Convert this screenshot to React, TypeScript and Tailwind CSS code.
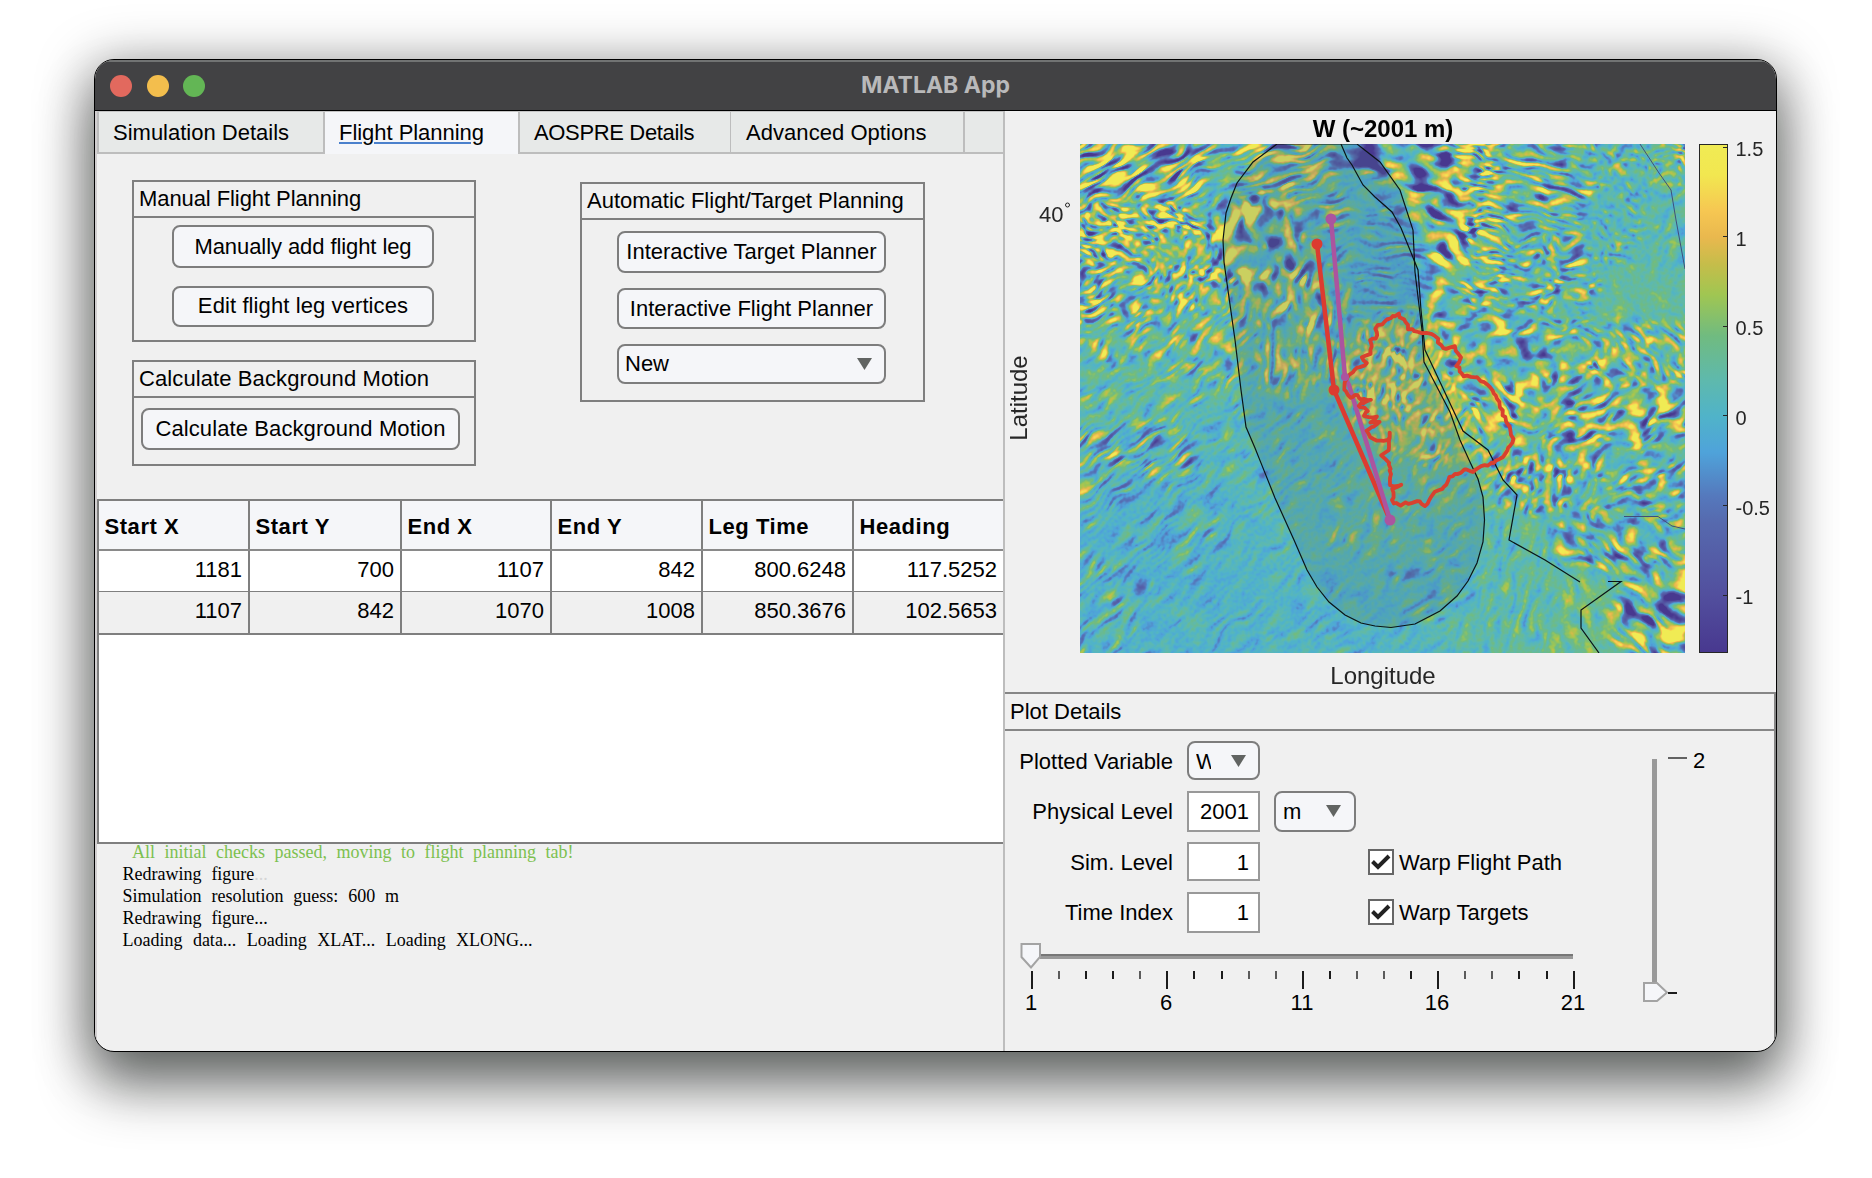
import { useEffect, useRef, type ReactNode } from "react";

const PLOT_W = 605;
const PLOT_H = 509;
const LEVEL_MAX = 1.52;
const LEVEL_MIN = -1.32;

// Colour stops of the vertical-velocity scale, from lowest to highest level.
const STOPS: [number, number, number, number][] = [
  [-1.32, 72, 56, 143],
  [-1.0, 82, 79, 158],
  [-0.6, 86, 105, 174],
  [-0.45, 85, 120, 188],
  [-0.2, 79, 163, 218],
  [0.0, 80, 179, 201],
  [0.2, 94, 185, 173],
  [0.45, 112, 187, 128],
  [0.68, 160, 198, 82],
  [0.85, 197, 189, 74],
  [1.0, 233, 184, 78],
  [1.15, 246, 199, 82],
  [1.35, 242, 231, 80],
  [1.52, 240, 235, 84],
];

function colourOf(v: number): [number, number, number] {
  if (v <= STOPS[0][0]) return [72, 56, 143];
  for (let i = 1; i < STOPS.length; i++) {
    if (v <= STOPS[i][0]) {
      const a = STOPS[i - 1];
      const b = STOPS[i];
      const t = (v - a[0]) / (b[0] - a[0]);
      return [a[1] + (b[1] - a[1]) * t, a[2] + (b[2] - a[2]) * t, a[3] + (b[3] - a[3]) * t];
    }
  }
  return [240, 235, 84];
}

function hash(x: number, y: number, s: number) {
  let h = (x * 374761393 + y * 668265263 + s * 974634777) | 0;
  h = Math.imul(h ^ (h >>> 13), 1274126177);
  h ^= h >>> 16;
  return (h >>> 0) / 4294967296;
}

function corner(ix: number, iy: number, fx: number, fy: number, s: number) {
  const a = hash(ix, iy, s) * Math.PI * 2;
  return Math.cos(a) * fx + Math.sin(a) * fy;
}

function noise(x: number, y: number, s: number) {
  const ix = Math.floor(x);
  const iy = Math.floor(y);
  const fx = x - ix;
  const fy = y - iy;
  const u = fx * fx * (3 - 2 * fx);
  const v = fy * fy * (3 - 2 * fy);
  const a = corner(ix, iy, fx, fy, s);
  const b = corner(ix + 1, iy, fx - 1, fy, s);
  const c = corner(ix, iy + 1, fx, fy - 1, s);
  const d = corner(ix + 1, iy + 1, fx - 1, fy - 1, s);
  return (a + (b - a) * u) * (1 - v) + (c + (d - c) * u) * v;
}

// Wave regions: centre, radii, crest direction (degrees), crest length, spacing, amplitude, offset.
const REGIONS: number[][] = [
  [60, 20, 110, 45, -30, 36, 7.5, 4.4, 0.25],
  [190, 20, 90, 38, -16, 34, 7, 3.6, 0.35],
  [60, 92, 80, 40, 20, 12, 7, 3.6, 0.5],
  [20, 150, 70, 45, -25, 16, 7, 3.2, 0.25],
  [110, 130, 60, 50, -60, 12, 8, 3.0, 0.4],
  [90, 200, 110, 45, -48, 20, 8, 1.9, 0.3],
  [172, 90, 50, 60, -82, 26, 15, 5.2, 0.25],
  [215, 150, 50, 60, -80, 20, 11, 3.6, 0.25],
  [215, 215, 45, 40, -85, 20, 8, 2.2, 0.4],
  [265, 75, 40, 80, -8, 24, 8, 1.5, 0.1],
  [310, 110, 45, 60, 4, 30, 7, 1.4, -0.12],
  [290, 12, 45, 22, 12, 40, 15, 5.0, -0.7],
  [350, 30, 40, 34, 8, 34, 13, 5.0, 0.3],
  [375, 80, 38, 60, 30, 24, 14, 4.6, 0.4],
  [398, 60, 24, 90, 10, 15, 6, 4.2, 0.5],
  [410, 130, 30, 40, 12, 16, 6, 3.4, 0.3],
  [460, 50, 60, 40, 12, 24, 7, 2.6, 0.2],
  [470, 140, 60, 50, -6, 14, 8, 2.4, 0.2],
  [540, 60, 40, 80, 40, 10, 8, 1.2, 0.15],
  [585, 90, 30, 70, -60, 20, 10, 0.8, 0.2],
  [590, 20, 18, 20, 0, 10, 6, 2.4, 0.4],
  [560, 150, 45, 35, 50, 24, 12, 0.5, 0.3],
  [420, 200, 60, 40, -20, 20, 13, 2.8, 0.2],
  [430, 250, 40, 40, 40, 20, 10, 3.8, 0.5],
  [560, 210, 60, 40, 45, 16, 8, 2.2, 0.35],
  [520, 270, 90, 50, -25, 20, 10, 3.2, 0.3],
  [470, 330, 60, 40, -60, 14, 9, 2.8, 0.3],
  [570, 340, 60, 50, -20, 18, 10, 2.6, 0.15],
  [530, 400, 60, 40, 40, 20, 10, 2.6, 0.15],
  [575, 475, 60, 32, 42, 34, 12, 4.6, 0.2],
  [500, 470, 40, 50, 70, 24, 12, 1.0, 0.4],
  [430, 440, 60, 70, -75, 26, 8, 0.8, 0.22],
  [320, 240, 50, 60, -70, 13, 8, 2.5, 0.68],
  [355, 285, 40, 40, -60, 14, 8, 1.8, 0.6],
  [300, 370, 90, 60, -50, 20, 9, 1.1, 0.25],
  [350, 430, 70, 50, -35, 26, 9, 1.2, 0.1],
  [200, 330, 80, 90, -42, 26, 8, 0.85, 0.12],
  [240, 470, 100, 60, -38, 28, 9, 0.65, 0.05],
  [40, 250, 70, 40, -36, 30, 8, 1.3, 0.22],
  [50, 305, 75, 42, -38, 30, 6.5, 2.2, 0.1],
  [90, 390, 90, 60, -44, 44, 8, 1.25, 0],
  [30, 450, 60, 60, -48, 34, 8, 1.3, 0.05],
  [130, 470, 90, 60, -44, 40, 8, 0.75, 0],
];

const GRAIN = 0.74;

function paintField(canvas: HTMLCanvasElement) {
  const ctx = canvas.getContext("2d");
  if (!ctx) return;
  const img = ctx.createImageData(PLOT_W, PLOT_H);
  const dirs = REGIONS.map((r) => [Math.cos((r[4] * Math.PI) / 180), Math.sin((r[4] * Math.PI) / 180)]);
  for (let y = 0; y < PLOT_H; y++) {
    for (let x = 0; x < PLOT_W; x++) {
      const wx = x + 9 * noise(x / 26, y / 26, 91);
      const wy = y + 9 * noise(x / 26, y / 26, 92);
      const envelope = Math.max(0.45, 0.95 + 1.1 * noise(x / 24, y / 20, 41));
      let sum = 0;
      let total = 0;
      for (let i = 0; i < REGIONS.length; i++) {
        const r = REGIONS[i];
        const dx = (wx - r[0]) / r[2];
        const dy = (wy - r[1]) / r[3];
        const d2 = dx * dx + dy * dy;
        if (d2 > 4.5) continue;
        const w = Math.exp(-2.6 * d2);
        const along = (wx * dirs[i][0] + wy * dirs[i][1]) / (r[5] * GRAIN);
        const across = (wy * dirs[i][0] - wx * dirs[i][1]) / (r[6] * GRAIN);
        sum += w * (r[8] + r[7] * envelope * noise(along, across, i + 1));
        total += w;
      }
      const v = total > 0 ? sum / total : 0;
      const c = colourOf(v + 0.25 * noise(x / 3.5, y / 3.5, 77));
      const k = (y * PLOT_W + x) * 4;
      img.data[k] = c[0];
      img.data[k + 1] = c[1];
      img.data[k + 2] = c[2];
      img.data[k + 3] = 255;
    }
  }
  ctx.putImageData(img, 0, 0);
}

const SWATH =
  "M272 32 L248 50 L232 71 L226 86 L221 101 L218 128 L219 150 L230 228 L236 278 L241 315 L250 336 L270 386 L289 428 L302 458 L312 475 L324 490 L340 503 L356 511 L370 514 L386 515.5 L410 512 L435 499 L452 484 L463 469 L472 451 L478 430 L479.500 408 L478 385 L473 367 L465 350 L455 328 L445 300 L419 250 L417 218 L410 160 L408 118 L395 78 L375 50 L352 32 Z";

// Outline of the target area.
const TARGET: [number, number][] = [
  [393, 202], [388, 205], [379, 209], [371, 216], [371, 226], [366, 229], [367, 235], [365, 242], [357, 245], [362, 251],
  [352, 256], [345, 263], [339, 269], [339, 277], [345, 286], [353, 282], [356, 288], [365, 288], [353, 293], [362, 298],
  [358, 303], [365, 306], [372, 304], [366, 310], [374, 309], [367, 316], [362, 318], [368, 328], [383, 328], [384, 321],
  [386, 322], [383, 330], [383, 338], [376, 344], [383, 350], [386, 362], [386, 374], [395, 373], [388, 378], [388, 391],
  [396, 393], [400, 391], [415, 390], [420, 394], [429, 379], [437, 377], [445, 366], [459, 358], [469, 359], [475, 354],
  [489, 351], [500, 342], [508, 330], [506, 316], [500, 306], [495, 296], [493, 286], [485, 275], [473, 266], [466, 264],
  [459, 265], [452, 254], [455, 245], [450, 235], [438, 236], [432, 226], [425, 221], [417, 222], [403, 217], [401, 209],
];

function roughPath(points: [number, number][]) {
  const out: string[] = [];
  points.forEach((p, i) => {
    const q = points[(i + 1) % points.length];
    const n = Math.max(1, Math.round(Math.hypot(q[0] - p[0], q[1] - p[1]) / 3.5));
    for (let k = 0; k < n; k++) {
      const jx = (hash(i, k, 5) - 0.5) * 2.4;
      const jy = (hash(i, k, 9) - 0.5) * 2.4;
      const x = p[0] + ((q[0] - p[0]) * k) / n + jx;
      const y = p[1] + ((q[1] - p[1]) * k) / n + jy;
      out.push(`${x.toFixed(1)} ${y.toFixed(1)}`);
    }
  });
  return `M${out.join(" L")} Z`;
}

function Axes() {
  const ref = useRef<HTMLCanvasElement>(null);
  useEffect(() => {
    if (ref.current) paintField(ref.current);
  }, []);
  const levels = [1.5, 1, 0.5, 0, -0.5, -1];
  return (
    <div className="relative h-[580px] w-full shrink-0">
      <canvas ref={ref} width={PLOT_W} height={PLOT_H} className="absolute top-8 left-[75px]" />
      <svg width="771" height="580" viewBox="0 0 771 580" className="absolute inset-0" fontFamily="'Liberation Sans', Arial, sans-serif">
        <defs>
          <linearGradient id="scale" x1="0" y1="1" x2="0" y2="0">
            {STOPS.map((s) => (
              <stop key={s[0]} offset={(s[0] - LEVEL_MIN) / (LEVEL_MAX - LEVEL_MIN)} stopColor={`rgb(${s[1]},${s[2]},${s[3]})`} />
            ))}
          </linearGradient>
          <clipPath id="plot">
            <rect x="75" y="32" width="605" height="509" />
          </clipPath>
        </defs>
        <g clipPath="url(#plot)" fill="none">
          <path d={SWATH} fill="rgb(70,115,140)" fillOpacity="0.22" />
          <path d={SWATH} stroke="#0b1417" strokeWidth="1.2" />
          <path
            d="M336 32 L342 46 L347 53 L358 73 L370 85 L387 100 L396 116 L407 143 L413 158 L416 198 L420 238 L435 270 L458 319 L483 338 L498 368 L512 383 L504 428 L540 448 L575 470"
            stroke="#0b1417"
            strokeWidth="1.2"
          />
          <path d="M603 469.500 H616 L576 498 V516 L594 541" stroke="#0b1417" strokeWidth="1.200" />
          <path d="M635 32 L654 61 L666 78 L671 108 L680 157 M619 404.500 H653 L667 414 L680 417" stroke="#3f4f7c" strokeWidth="1" />
          <path d="M312 132 L329 278 L385 408" stroke="#dc3b30" strokeWidth="4.500" />
          <path d="M326 107 L340 265 L344 273 L385 408" stroke="#ab549f" strokeWidth="4.500" />
          <path d={roughPath(TARGET)} stroke="#d9402f" strokeWidth="3.8" strokeLinejoin="round" />
          <g fill="#dc3b30">
            <circle cx="312" cy="132" r="5.500" />
            <circle cx="329" cy="278" r="5.500" />
          </g>
          <g fill="#ab549f">
            <circle cx="326" cy="107" r="5.500" />
            <circle cx="340" cy="265" r="4" />
            <circle cx="385" cy="408" r="5.500" />
          </g>
        </g>
        <rect x="694.5" y="32.5" width="28" height="508" fill="url(#scale)" stroke="#262626" />
        {levels.map((v) => {
          const y = 32 + ((LEVEL_MAX - v) / (LEVEL_MAX - LEVEL_MIN)) * 509;
          return (
            <g key={v}>
              <path d={`M718 ${Math.round(y) - 0.5} H723`} stroke="#262626" />
              <text x="730.500" y={y + 8.5} fontSize="20" fill="#262626">
                {v}
              </text>
            </g>
          );
        })}
        <text x="378" y="24.500" fontSize="24" fontWeight="700" fill="#000" textAnchor="middle">
          W (~2001 m)
        </text>
        <text x="378" y="571.500" fontSize="24" fill="#262626" textAnchor="middle">
          Longitude
        </text>
        <text transform="translate(22 286) rotate(-90)" fontSize="24" fill="#262626" textAnchor="middle">
          Latitude
        </text>
        <text x="34" y="109.500" fontSize="22" fill="#262626">
          40
        </text>
        <circle cx="62.500" cy="93" r="2" fill="none" stroke="#262626" strokeWidth="1" />
      </svg>
    </div>
  );
}

function Caret({ className = "" }: { className?: string }) {
  return (
    <svg width="15" height="12" viewBox="0 0 15 12" className={className}>
      <path d="M0 0 H15 L7.500 12 Z" fill="#616462" />
    </svg>
  );
}

function Button({ children, className }: { children: ReactNode; className: string }) {
  return (
    <button className={`flex items-center justify-center rounded-lg border-2 border-[#7d7d7d] bg-[#f5f6f9] whitespace-nowrap ${className}`}>
      {children}
    </button>
  );
}

function Group({ title, className, children }: { title: string; className: string; children: ReactNode }) {
  return (
    <section className={`flex flex-col border-2 border-[#7f7f7f] ${className}`}>
      <h2 className="flex h-9 shrink-0 items-center border-b-2 border-[#7f7f7f] pl-[5px] whitespace-nowrap">{title}</h2>
      {children}
    </section>
  );
}

function Tabs() {
  const off = "border-b-2 border-[#bdbdbd] bg-[#e7e9e8]";
  return (
    <nav className="flex h-[43px] shrink-0 border-t border-t-[#c4c4c4] leading-[42px]">
      <div className={`w-[228px] border-r-2 border-l-2 pl-3.5 ${off}`}>Simulation Details</div>
      <div className="w-[193px] bg-[#f5f6f9] pl-3.5 tracking-[-0.04px]">
        <span className="underline decoration-[#4a80cc] decoration-2 underline-offset-2">Flight Planning</span>
      </div>
      <div className={`w-[213px] border-r border-l-2 pl-3.5 tracking-[-0.35px] ${off}`}>AOSPRE Details</div>
      <div className={`w-[234px] border-r-2 pl-[15px] tracking-[0.05px] ${off}`}>Advanced Options</div>
      <div className={`grow ${off}`} />
    </nav>
  );
}

const COLUMNS = ["Start X", "Start Y", "End X", "End Y", "Leg Time", "Heading"];
const ROWS = [
  ["1181", "700", "1107", "842", "800.6248", "117.5252"],
  ["1107", "842", "1070", "1008", "850.3676", "102.5653"],
];

function LegTable() {
  const grid = "grid grid-cols-[151px_152px_150px_151px_151px_149px]";
  return (
    <div className="h-[345px] w-full shrink-0 overflow-hidden border-2 border-r-0 border-[#7f7f7f] bg-white">
      <div className={`${grid} h-[50px] border-b-2 border-[#8a8a8a] bg-[#f5f6f9] font-bold tracking-[0.55px]`}>
        {COLUMNS.map((c) => (
          <div key={c} className="flex items-center border-r-2 border-[#7f7f7f] pt-[3px] pl-[5.500px] last:border-r-0">
            {c}
          </div>
        ))}
      </div>
      {ROWS.map((row, i) => (
        <div key={i} className={i === 0 ? `${grid} h-[41px] border-b border-[#7f7f7f]` : `${grid} h-[43px] border-b-2 border-[#7f7f7f] bg-[#f0f0f0]`}>
          {row.map((v, k) => (
            <div key={k} className="flex items-center justify-end border-r-2 border-[#7f7f7f] pr-1.5 pb-[3px] last:border-r-0">
              {v}
            </div>
          ))}
        </div>
      ))}
    </div>
  );
}

function Log() {
  return (
    <div className="pl-[25.500px] font-['Liberation_Serif',serif] text-[18px] leading-[22px] text-black [word-spacing:5.4px] whitespace-pre">
      <div className="-mt-[3px] h-[22px] pl-[9.500px] text-[#7cc04f] [word-spacing:5px]">All initial checks passed, moving to flight planning tab!</div>
      <div>
        Redrawing figure<span className="text-[#d5d5d5]">...</span>
      </div>
      <div>Simulation resolution guess: 600 m</div>
      <div>Redrawing figure...</div>
      <div className="[word-spacing:5.9px]">Loading data... Loading XLAT... Loading XLONG...</div>
    </div>
  );
}

function Check({ label }: { label: string }) {
  return (
    <label className="flex items-center gap-[5px] whitespace-nowrap">
      <span className="flex size-[26px] items-center justify-center border-2 border-[#666] bg-white">
        <svg width="20" height="18" viewBox="0 0 20 18">
          <path d="M1.500 8.500 L7 14 L18 3" fill="none" stroke="#222" strokeWidth="4" />
        </svg>
      </span>
      <span className="pt-0.5">{label}</span>
    </label>
  );
}

function Field({ value }: { value: string }) {
  return <div className="flex w-[73px] items-center justify-end border-2 border-[#999] bg-white pt-0.5 pr-[9px]">{value}</div>;
}

function TimeSlider() {
  return (
    <svg width="575" height="74" viewBox="0 0 575 74" fontFamily="'Liberation Sans', Arial, sans-serif" fontSize="22">
      <path d="M20 12 H553" stroke="#777" strokeWidth="2" />
      <path d="M20 14.500 H553" stroke="#999" strokeWidth="3" />
      <path d="M1.500 1 H20 V14 L11 24.500 L1.500 14 Z" fill="#f5f6f9" stroke="#a3a3a3" strokeWidth="2" />
      {Array.from({ length: 21 }, (_, i) => {
        const x = Math.round(12 + i * 27.08);
        const major = i % 5 === 0;
        return (
          <g key={i}>
            <path d={`M${x} 28 V${major ? 46 : 36}`} stroke="#1c1c1c" strokeWidth={major || i % 4 > 1 ? 2 : 1.4} />
            {major && (
              <text x={x - 1} y="66.500" textAnchor="middle">
                {i + 1}
              </text>
            )}
          </g>
        );
      })}
    </svg>
  );
}

function LevelSlider() {
  return (
    <svg width="70" height="260" viewBox="0 0 70 260" fontFamily="'Liberation Sans', Arial, sans-serif" fontSize="22">
      <path d="M11.500 10 V234" stroke="#999" strokeWidth="5" />
      <path d="M1 234 H14 L24 243.500 L14 252 H1 Z" fill="#f5f6f9" stroke="#a3a3a3" strokeWidth="2" />
      <path d="M25 9 H44" stroke="#333" strokeWidth="1.500" />
      <path d="M25 244 H34" stroke="#1c1c1c" strokeWidth="2" />
      <text x="50" y="19">
        2
      </text>
    </svg>
  );
}

function PlotDetails() {
  return (
    <section className="flex grow flex-col border-t-2 border-r-2 border-[#868686]">
      <h2 className="flex h-[37px] shrink-0 items-center border-b-2 border-[#868686] pl-[5px]">Plot Details</h2>
      <div className="flex grow pt-2.5">
        <div className="w-[638px] shrink-0">
          <div className="grid grid-cols-[168px_73px_82px_150px] grid-rows-[39px_41px_39px_41px] gap-x-3.5 gap-y-[10.5px] [&>span]:flex [&>span]:items-center [&>span]:justify-end [&>span]:pt-0.5">
            <span>Plotted Variable</span>
            <div className="flex items-center rounded-lg border-2 border-[#7d7d7d] bg-[#f5f6f9] pl-[7px]">
              <div className="w-[15px] overflow-hidden pt-0.5">W</div>
              <Caret className="ml-5" />
            </div>
            <div />
            <div />
            <span>Physical Level</span>
            <Field value="2001" />
            <div className="flex items-center rounded-lg border-2 border-[#7d7d7d] bg-[#f5f6f9] pl-[7px]">
              <div className="grow pt-0.5">m</div>
              <Caret className="mr-[13px]" />
            </div>
            <div />
            <span>Sim. Level</span>
            <Field value="1" />
            <div />
            <div className="-ml-0.5 flex items-center">
              <Check label="Warp Flight Path" />
            </div>
            <span>Time Index</span>
            <Field value="1" />
            <div />
            <div className="-ml-0.5 flex items-center">
              <Check label="Warp Targets" />
            </div>
          </div>
          <div className="mt-[10px] ml-[15px]">
            <TimeSlider />
          </div>
        </div>
        <div className="pt-2">
          <LevelSlider />
        </div>
      </div>
    </section>
  );
}

export default function App() {
  return (
    <div className="h-[1178px] w-[1872px] overflow-hidden bg-white pt-[59px] pl-[94px] font-['Liberation_Sans',Arial,sans-serif] text-[22px] leading-none text-black">
      <div className="flex h-[993px] w-[1683px] flex-col overflow-hidden rounded-[20px] border border-black bg-[#f0f0f0] shadow-[0_36px_56px_rgba(0,6,4,0.45),0_8px_52px_6px_rgba(0,6,4,0.36)]">
        <header className="grid h-[51px] shrink-0 grid-cols-[1fr_auto_1fr] items-center border-t-2 border-b border-t-[#717373] border-b-black bg-[#424244]">
          <div className="flex gap-[14.500px] pl-[15px]">
            <span className="size-[22px] rounded-full bg-[#e2695e]" />
            <span className="size-[22px] rounded-full bg-[#f3be4d]" />
            <span className="size-[22px] rounded-full bg-[#63b655]" />
          </div>
          <h1 className="pb-px font-['Inter',sans-serif] text-[23px] font-bold text-[#b9b9ba]">MATLAB App</h1>
          <div />
        </header>
        <div className="flex grow">
          <main className="flex w-[910px] shrink-0 flex-col border-r-2 border-l-2 border-r-[#bdbdbd] border-l-[#d2cfd0]">
            <Tabs />
            <div className="flex h-[345px] shrink-0 pl-[35px]">
              <div className="flex w-[344px] flex-col gap-[18px] pt-[26px]">
                <Group title="Manual Flight Planning" className="h-[162px] tracking-[-0.08px]">
                  <div className="flex flex-col gap-[18px] pt-[7px] pl-[38px]">
                    <Button className="h-[43px] w-[262px]">Manually add flight leg</Button>
                    <Button className="h-[41px] w-[262px] pb-px tracking-[0.1px]">Edit flight leg vertices</Button>
                  </div>
                </Group>
                <Group title="Calculate Background Motion" className="h-[106px] tracking-[0.1px]">
                  <div className="pt-[10px] pl-[7px]">
                    <Button className="h-[42px] w-[319px]">Calculate Background Motion</Button>
                  </div>
                </Group>
              </div>
              <div className="ml-[104px] pt-7">
                <Group title="Automatic Flight/Target Planning" className="h-[220px] w-[345px]">
                  <div className="flex flex-col gap-[15px] pt-[11px] pl-[35px]">
                    <Button className="h-[42px] w-[269px]">Interactive Target Planner</Button>
                    <Button className="h-[41px] w-[269px]">Interactive Flight Planner</Button>
                    <div className="flex h-10 w-[269px] items-center justify-between rounded-lg border-2 border-[#7d7d7d] bg-[#f5f6f9] pr-3 pl-1.5">
                      New
                      <Caret />
                    </div>
                  </div>
                </Group>
              </div>
            </div>
            <LegTable />
            <Log />
          </main>
          <aside className="flex grow flex-col pt-px">
            <Axes />
            <PlotDetails />
          </aside>
        </div>
      </div>
    </div>
  );
}
